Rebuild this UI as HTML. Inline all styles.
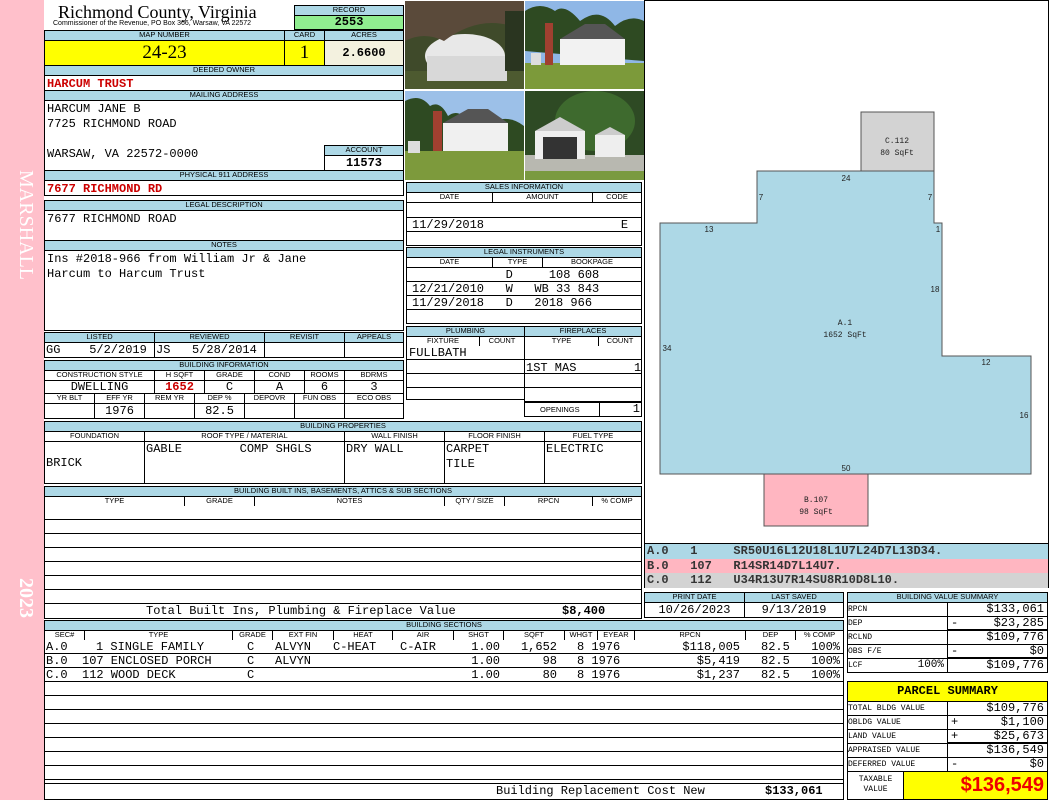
<!DOCTYPE html>
<html><head><meta charset="utf-8"><style>
*{margin:0;padding:0}
body{width:1050px;height:800px;background:#fff;position:relative;overflow:hidden;font-family:"Liberation Mono",monospace}
div{position:absolute;box-sizing:border-box}
.h{background:#add8e6;border:1px solid #000;font:7.5px/8px "Liberation Sans",sans-serif;text-align:center;color:#000;white-space:nowrap;overflow:hidden}
.c{border:1px solid #000;background:#fff;font-size:12px;line-height:13px;white-space:pre;overflow:hidden}
.r{text-align:right;padding-right:3px}
.m{text-align:center}
.red{color:#c00;font-weight:bold}
.s{position:absolute;white-space:pre;font-size:12px;line-height:14px}
.sr{position:absolute;white-space:pre;font-size:12px;line-height:14px;text-align:right}
.sg{position:absolute;left:3px;top:0}
.sv{position:absolute;right:3px;top:0}
</style></head><body>
<div style="left:0;top:0;width:44px;height:800px;background:#ffc0cb"></div>
<div style="left:9px;top:170px;width:28px;height:140px;writing-mode:vertical-rl;font:20px 'Liberation Serif',serif;color:#fff">MARSHALL</div>
<div style="left:9px;top:578px;width:28px;height:60px;writing-mode:vertical-rl;font:bold 20px 'Liberation Serif',serif;color:#fff">2023</div>

<div style="left:58px;top:2px;font:18px/21px 'Liberation Serif',serif;white-space:nowrap">Richmond County, Virginia</div>
<div style="left:53px;top:19px;font:7px/9px 'Liberation Sans',sans-serif;white-space:nowrap">Commissioner of the Revenue, PO Box 366, Warsaw, VA 22572</div>
<div class="h" style="left:294px;top:5px;width:110px;height:11px">RECORD</div>
<div class="c m" style="left:294px;top:15px;width:110px;height:15px;background:#90ee90;font-weight:bold;line-height:13px">2553</div>

<div class="h" style="left:44px;top:30px;width:241px;height:11px">MAP NUMBER</div>
<div class="h" style="left:284px;top:30px;width:41px;height:11px">CARD</div>
<div class="h" style="left:324px;top:30px;width:80px;height:11px">ACRES</div>
<div class="c m" style="left:44px;top:40px;width:241px;height:26px;background:#ff0;font:19px/24px 'Liberation Serif',serif">24-23</div>
<div class="c m" style="left:284px;top:40px;width:41px;height:26px;background:#ff0;font:19px/24px 'Liberation Serif',serif">1</div>
<div class="c m" style="left:324px;top:40px;width:80px;height:26px;background:#f3f1df;font-weight:bold;line-height:24px">2.6600</div>

<div class="h" style="left:44px;top:65px;width:360px;height:11px">DEEDED OWNER</div>
<div class="c red" style="left:44px;top:75px;width:360px;height:16px;padding-left:2px;line-height:16px">HARCUM TRUST</div>
<div class="h" style="left:44px;top:90px;width:360px;height:11px">MAILING ADDRESS</div>
<div class="c" style="left:44px;top:100px;width:360px;height:71px;padding:1px 2px;line-height:15px">HARCUM JANE B
7725 RICHMOND ROAD

WARSAW, VA 22572-0000</div>
<div class="h" style="left:324px;top:145px;width:80px;height:11px">ACCOUNT</div>
<div class="c m" style="left:324px;top:155px;width:80px;height:16px;font-weight:bold;line-height:15px">11573</div>
<div class="h" style="left:44px;top:170px;width:360px;height:11px">PHYSICAL 911 ADDRESS</div>
<div class="c red" style="left:44px;top:180px;width:360px;height:16px;padding-left:2px;line-height:16px">7677 RICHMOND RD</div>

<div class="h" style="left:44px;top:200px;width:360px;height:11px">LEGAL DESCRIPTION</div>
<div class="c" style="left:44px;top:210px;width:360px;height:31px;padding:1px 2px;line-height:15px">7677 RICHMOND ROAD</div>
<div class="h" style="left:44px;top:240px;width:360px;height:11px">NOTES</div>
<div class="c" style="left:44px;top:250px;width:360px;height:81px;padding:1px 2px;line-height:15px">Ins #2018-966 from William Jr &amp; Jane
Harcum to Harcum Trust</div>

<div class="h" style="left:44px;top:332px;width:111px;height:11px">LISTED</div>
<div class="h" style="left:154px;top:332px;width:111px;height:11px">REVIEWED</div>
<div class="h" style="left:264px;top:332px;width:81px;height:11px">REVISIT</div>
<div class="h" style="left:344px;top:332px;width:60px;height:11px">APPEALS</div>
<div class="c" style="left:44px;top:342px;width:111px;height:16px;padding-left:1px;line-height:15px">GG    5/2/2019</div>
<div class="c" style="left:154px;top:342px;width:111px;height:16px;padding-left:1px;line-height:15px">JS   5/28/2014</div>
<div class="c" style="left:264px;top:342px;width:81px;height:16px"></div>
<div class="c" style="left:344px;top:342px;width:60px;height:16px"></div>

<div class="h" style="left:44px;top:360px;width:360px;height:11px">BUILDING INFORMATION</div>
<div class="h" style="left:44px;top:370px;width:111px;height:11px;background:#fff">CONSTRUCTION STYLE</div>
<div class="h" style="left:154px;top:370px;width:51px;height:11px;background:#fff">H SQFT</div>
<div class="h" style="left:204px;top:370px;width:51px;height:11px;background:#fff">GRADE</div>
<div class="h" style="left:254px;top:370px;width:51px;height:11px;background:#fff">COND</div>
<div class="h" style="left:304px;top:370px;width:41px;height:11px;background:#fff">ROOMS</div>
<div class="h" style="left:344px;top:370px;width:60px;height:11px;background:#fff">BDRMS</div>
<div class="c m" style="left:44px;top:380px;width:111px;height:14px">DWELLING</div>
<div class="c m red" style="left:154px;top:380px;width:51px;height:14px">1652</div>
<div class="c m" style="left:204px;top:380px;width:51px;height:14px">C</div>
<div class="c m" style="left:254px;top:380px;width:51px;height:14px">A</div>
<div class="c m" style="left:304px;top:380px;width:41px;height:14px">6</div>
<div class="c m" style="left:344px;top:380px;width:60px;height:14px">3</div>
<div class="h" style="left:44px;top:393px;width:51px;height:11px;background:#fff">YR BLT</div>
<div class="h" style="left:94px;top:393px;width:51px;height:11px;background:#fff">EFF YR</div>
<div class="h" style="left:144px;top:393px;width:51px;height:11px;background:#fff">REM YR</div>
<div class="h" style="left:194px;top:393px;width:51px;height:11px;background:#fff">DEP %</div>
<div class="h" style="left:244px;top:393px;width:51px;height:11px;background:#fff">DEPOVR</div>
<div class="h" style="left:294px;top:393px;width:51px;height:11px;background:#fff">FUN OBS</div>
<div class="h" style="left:344px;top:393px;width:60px;height:11px;background:#fff">ECO OBS</div>
<div class="c" style="left:44px;top:403px;width:51px;height:16px"></div>
<div class="c m" style="left:94px;top:403px;width:51px;height:16px;line-height:14px">1976</div>
<div class="c" style="left:144px;top:403px;width:51px;height:16px"></div>
<div class="c m" style="left:194px;top:403px;width:51px;height:16px;line-height:14px">82.5</div>
<div class="c" style="left:244px;top:403px;width:51px;height:16px"></div>
<div class="c" style="left:294px;top:403px;width:51px;height:16px"></div>
<div class="c" style="left:344px;top:403px;width:60px;height:16px"></div>

<div class="h" style="left:44px;top:421px;width:598px;height:11px">BUILDING PROPERTIES</div>
<div class="h" style="left:44px;top:431px;width:101px;height:11px;background:#fff">FOUNDATION</div>
<div class="h" style="left:144px;top:431px;width:201px;height:11px;background:#fff">ROOF TYPE / MATERIAL</div>
<div class="h" style="left:344px;top:431px;width:101px;height:11px;background:#fff">WALL FINISH</div>
<div class="h" style="left:444px;top:431px;width:101px;height:11px;background:#fff">FLOOR FINISH</div>
<div class="h" style="left:544px;top:431px;width:98px;height:11px;background:#fff">FUEL TYPE</div>
<div class="c" style="left:44px;top:441px;width:101px;height:43px;padding:14px 1px 0;line-height:15px">BRICK</div>
<div class="c" style="left:144px;top:441px;width:201px;height:43px;padding:0 1px;line-height:15px">GABLE        COMP SHGLS</div>
<div class="c" style="left:344px;top:441px;width:101px;height:43px;padding:0 1px;line-height:15px">DRY WALL</div>
<div class="c" style="left:444px;top:441px;width:101px;height:43px;padding:0 1px;line-height:15px">CARPET
TILE</div>
<div class="c" style="left:544px;top:441px;width:98px;height:43px;padding:0 1px;line-height:15px">ELECTRIC</div>

<div class="h" style="left:44px;top:486px;width:598px;height:11px">BUILDING BUILT INS, BASEMENTS, ATTICS &amp; SUB SECTIONS</div>
<div class="h" style="left:44px;top:496px;width:141px;height:11px;background:#fff">TYPE</div>
<div class="h" style="left:184px;top:496px;width:71px;height:11px;background:#fff">GRADE</div>
<div class="h" style="left:254px;top:496px;width:191px;height:11px;background:#fff">NOTES</div>
<div class="h" style="left:444px;top:496px;width:61px;height:11px;background:#fff">QTY / SIZE</div>
<div class="h" style="left:504px;top:496px;width:89px;height:11px;background:#fff">RPCN</div>
<div class="h" style="left:592px;top:496px;width:50px;height:11px;background:#fff">% COMP</div>
<div style="left:44px;top:506px;width:598px;height:98px;border:1px solid #000;border-top:0;background:repeating-linear-gradient(#fff 0 13px,#000 13px 14px)"></div>
<div class="c" style="left:44px;top:603px;width:598px;height:16px;line-height:15px"><span style="position:absolute;left:101px">Total Built Ins, Plumbing &amp; Fireplace Value</span><span style="position:absolute;left:517px;font-weight:bold">$8,400</span></div>

<!-- building sections -->
<div class="h" style="left:44px;top:620px;width:800px;height:11px">BUILDING SECTIONS</div>
<div class="h" style="left:44px;top:630px;width:41px;height:11px;background:#fff">SEC#</div>
<div class="h" style="left:84px;top:630px;width:149px;height:11px;background:#fff">TYPE</div>
<div class="h" style="left:232px;top:630px;width:41px;height:11px;background:#fff">GRADE</div>
<div class="h" style="left:272px;top:630px;width:62px;height:11px;background:#fff">EXT FIN</div>
<div class="h" style="left:333px;top:630px;width:60px;height:11px;background:#fff">HEAT</div>
<div class="h" style="left:392px;top:630px;width:62px;height:11px;background:#fff">AIR</div>
<div class="h" style="left:453px;top:630px;width:51px;height:11px;background:#fff">SHGT</div>
<div class="h" style="left:503px;top:630px;width:62px;height:11px;background:#fff">SQFT</div>
<div class="h" style="left:564px;top:630px;width:34px;height:11px;background:#fff">WHGT</div>
<div class="h" style="left:597px;top:630px;width:38px;height:11px;background:#fff">EYEAR</div>
<div class="h" style="left:634px;top:630px;width:112px;height:11px;background:#fff">RPCN</div>
<div class="h" style="left:745px;top:630px;width:51px;height:11px;background:#fff">DEP</div>
<div class="h" style="left:795px;top:630px;width:49px;height:11px;background:#fff">% COMP</div>
<div style="left:44px;top:640px;width:800px;height:160px;border:1px solid #000;border-top:0;background:repeating-linear-gradient(#fff 0 13px,#000 13px 14px)"></div>
<div style="left:45px;top:640px;width:798px;height:41px;background:#fff"></div>
<div style="left:44px;top:653px;width:800px;height:1px;background:#000"></div>
<div style="left:44px;top:667px;width:800px;height:1px;background:#000"></div>
<div style="left:44px;top:681px;width:800px;height:1px;background:#000"></div>

<div class="s" style="left:46px;top:640px">A.0</div><div class="s" style="left:46px;top:654px">B.0</div><div class="s" style="left:46px;top:668px">C.0</div>
<div class="s" style="left:96px;top:640px">1 SINGLE FAMILY</div><div class="s" style="left:82px;top:654px">107 ENCLOSED PORCH</div><div class="s" style="left:82px;top:668px">112 WOOD DECK</div>
<div class="s" style="left:247px;top:640px">C</div><div class="s" style="left:247px;top:654px">C</div><div class="s" style="left:247px;top:668px">C</div>
<div class="s" style="left:275px;top:640px">ALVYN</div><div class="s" style="left:275px;top:654px">ALVYN</div>
<div class="s" style="left:333px;top:640px">C-HEAT</div><div class="s" style="left:400px;top:640px">C-AIR</div>
<div class="sr" style="right:550px;top:640px">1.00</div><div class="sr" style="right:550px;top:654px">1.00</div><div class="sr" style="right:550px;top:668px">1.00</div>
<div class="sr" style="right:493px;top:640px">1,652</div><div class="sr" style="right:493px;top:654px">98</div><div class="sr" style="right:493px;top:668px">80</div>
<div class="s" style="left:577px;top:640px">8 1976</div><div class="s" style="left:577px;top:654px">8 1976</div><div class="s" style="left:577px;top:668px">8 1976</div>
<div class="sr" style="right:310px;top:640px">$118,005</div><div class="sr" style="right:310px;top:654px">$5,419</div><div class="sr" style="right:310px;top:668px">$1,237</div>
<div class="s" style="left:761px;top:640px">82.5</div><div class="s" style="left:761px;top:654px">82.5</div><div class="s" style="left:761px;top:668px">82.5</div>
<div class="sr" style="right:210px;top:640px">100%</div><div class="sr" style="right:210px;top:654px">100%</div><div class="sr" style="right:210px;top:668px">100%</div>

<div style="left:44px;top:783px;width:800px;height:17px;border:1px solid #000;background:#fff;font-size:12px;line-height:15px;white-space:pre"><span style="position:absolute;left:451px">Building Replacement Cost New</span><span style="position:absolute;left:720px;font-weight:bold">$133,061</span></div>

<svg style="position:absolute;left:404px;top:0" width="241" height="181">
<rect width="241" height="181" fill="#fff"/>
<g transform="translate(1,1)"><rect width="119" height="88" fill="#3f4a2a"/><rect y="70" width="119" height="18" fill="#4d5a30"/><ellipse cx="60" cy="55" rx="40" ry="22" fill="#e8e8e8"/><rect x="22" y="55" width="80" height="25" fill="#d8d8d8"/><path d="M0 0h119v30q-40-20-80 10q-20-10-39 0z" fill="#5a4a3a"/><rect x="100" y="10" width="19" height="60" fill="#2a3520"/></g>
<g transform="translate(121,1)"><rect width="119" height="88" fill="#8fb7e6"/><path d="M0 50V10q15-10 30 0q10-8 25 10q20-15 35 5q15-12 29 -5v40z" fill="#2e4a22"/><rect y="62" width="119" height="26" fill="#7c9a3a"/><rect x="35" y="38" width="65" height="26" fill="#f2f2f2"/><path d="M35 38l25-15h20l20 15z" fill="#555"/><rect x="20" y="22" width="8" height="42" fill="#a04030"/><rect x="6" y="52" width="10" height="12" fill="#ddd"/></g>
<g transform="translate(1,91)"><rect width="119" height="89" fill="#9cc0e8"/><path d="M0 70V10q15-8 25 5q10-6 18 10q10 -8 20 5v50z" fill="#2e4a22"/><path d="M90 70V30q15-6 29 5v35z" fill="#2e4a22"/><rect y="60" width="119" height="29" fill="#7d9a3c"/><rect x="38" y="32" width="65" height="28" fill="#f0f0f0"/><path d="M38 32l25-14h20l20 14z" fill="#555"/><rect x="28" y="20" width="9" height="40" fill="#a04030"/><rect x="3" y="50" width="12" height="12" fill="#ddd"/></g>
<g transform="translate(121,91)"><rect width="119" height="89" fill="#2e4a24"/><ellipse cx="70" cy="30" rx="40" ry="30" fill="#3e6a2e"/><rect y="64" width="119" height="25" fill="#b8b8b0"/><rect y="80" width="119" height="9" fill="#7a9a40"/><rect x="10" y="40" width="50" height="28" fill="#eee"/><path d="M10 40l25-14l25 14z" fill="#ccc"/><rect x="18" y="46" width="34" height="22" fill="#333"/><rect x="70" y="44" width="30" height="22" fill="#eee"/><path d="M70 44l15-8l15 8z" fill="#ccc"/></g>
</svg>

<div class="h" style="left:406px;top:182px;width:236px;height:11px">SALES INFORMATION</div>
<div class="h" style="left:406px;top:192px;width:87px;height:11px;background:#fff">DATE</div>
<div class="h" style="left:492px;top:192px;width:101px;height:11px;background:#fff">AMOUNT</div>
<div class="h" style="left:592px;top:192px;width:50px;height:11px;background:#fff">CODE</div>
<div class="c" style="left:406px;top:202px;width:236px;height:16px"></div>
<div class="c" style="left:406px;top:217px;width:236px;height:15px;padding-left:5px;line-height:14px">11/29/2018                   E</div>
<div class="c" style="left:406px;top:231px;width:236px;height:15px"></div>

<div class="h" style="left:406px;top:247px;width:236px;height:11px">LEGAL INSTRUMENTS</div>
<div class="h" style="left:406px;top:257px;width:87px;height:11px;background:#fff">DATE</div>
<div class="h" style="left:492px;top:257px;width:51px;height:11px;background:#fff">TYPE</div>
<div class="h" style="left:542px;top:257px;width:100px;height:11px;background:#fff">BOOKPAGE</div>
<div class="c" style="left:406px;top:267px;width:236px;height:15px;padding-left:5px;line-height:14px">             D     108 608</div>
<div class="c" style="left:406px;top:281px;width:236px;height:15px;padding-left:5px;line-height:14px">12/21/2010   W   WB 33 843</div>
<div class="c" style="left:406px;top:295px;width:236px;height:15px;padding-left:5px;line-height:14px">11/29/2018   D   2018 966</div>
<div class="c" style="left:406px;top:309px;width:236px;height:15px"></div>

<div class="h" style="left:406px;top:326px;width:119px;height:11px">PLUMBING</div>
<div class="h" style="left:524px;top:326px;width:118px;height:11px">FIREPLACES</div>
<div class="h" style="left:406px;top:336px;width:74px;height:11px;background:#fff">FIXTURE</div>
<div class="h" style="left:479px;top:336px;width:46px;height:11px;background:#fff">COUNT</div>
<div class="h" style="left:524px;top:336px;width:75px;height:11px;background:#fff">TYPE</div>
<div class="h" style="left:598px;top:336px;width:44px;height:11px;background:#fff">COUNT</div>
<div style="left:406px;top:346px;width:119px;height:54px;border:1px solid #000;border-top:0;background:repeating-linear-gradient(#fff 0 13px,#000 13px 14px)"></div>
<div style="left:406px;top:346px;width:119px;height:13px;font-size:12px;line-height:14px;white-space:pre;padding-left:2px;background:#fff;border-left:1px solid #000;border-right:1px solid #000">FULLBATH        2</div>
<div style="left:524px;top:346px;width:118px;height:71px;border:1px solid #000;border-top:0;background:repeating-linear-gradient(#fff 0 13px,#000 13px 14px)"></div>
<div style="left:525px;top:361px;width:116px;height:12px;font-size:12px;line-height:14px;white-space:pre;padding-left:1px;background:#fff">1ST MAS        1</div>
<div style="left:524px;top:402px;width:118px;height:15px;border:1px solid #000;background:#fff;font:7.5px/13px 'Liberation Sans',sans-serif;padding-left:15px">OPENINGS<span style="position:absolute;left:74px;top:0;height:13px;border-left:1px solid #000;width:40px;font:12px/13px 'Liberation Mono';text-align:right;padding-right:3px">1</span></div>

<div style="left:644px;top:0;width:405px;height:544px;border:1px solid #000;border-bottom:0"></div>
<svg style="position:absolute;left:644px;top:0" width="406" height="544">
<g transform="translate(-644,0)" font-family="Liberation Sans,sans-serif" font-size="8">
<polygon points="861,112 934,112 934,171 861,171" fill="#d3d3d3" stroke="#555"/>
<polygon points="660,223 757,223 757,171 934,171 934,223 942,223 942,356 1031,356 1031,474 660,474" fill="#add8e6" stroke="#555"/>
<polygon points="764,474 868,474 868,526 764,526" fill="#ffb6c1" stroke="#555"/>
<g font-family="Liberation Mono,monospace" font-size="8" text-anchor="middle" fill="#222">
<text x="897" y="143">C.112</text><text x="897" y="155">80 SqFt</text>
<text x="845" y="325">A.1</text><text x="845" y="337">1652 SqFt</text>
<text x="816" y="502">B.107</text><text x="816" y="514">98 SqFt</text>
</g>
<g fill="#222" text-anchor="middle"><text x="846" y="181">24</text><text x="761" y="200">7</text><text x="930" y="200">7</text><text x="709" y="232">13</text><text x="938" y="232">1</text><text x="935" y="292">18</text><text x="667" y="351">34</text><text x="986" y="365">12</text><text x="1024" y="418">16</text><text x="846" y="471">50</text></g>
</g></svg>
<div style="left:644px;top:543px;width:405px;height:45px;border:1px solid #000;font-size:12px;line-height:14.5px;white-space:pre;font-weight:bold;color:#333">
<div style="left:0;right:0;top:0;height:14.5px;background:#add8e6;padding-left:2px">A.0   1     SR50U16L12U18L1U7L24D7L13D34.</div>
<div style="left:0;right:0;top:14.5px;height:14.5px;background:#ffb6c1;padding-left:2px">B.0   107   R14SR14D7L14U7.</div>
<div style="left:0;right:0;top:29px;height:15px;background:#d3d3d3;padding-left:2px">C.0   112   U34R13U7R14SU8R10D8L10.</div></div>

<div class="h" style="left:644px;top:592px;width:101px;height:11px">PRINT DATE</div>
<div class="h" style="left:744px;top:592px;width:100px;height:11px">LAST SAVED</div>
<div class="c m" style="left:644px;top:602px;width:101px;height:16px;line-height:15px">10/26/2023</div>
<div class="c m" style="left:744px;top:602px;width:100px;height:16px;line-height:15px">9/13/2019</div>

<div class="h" style="left:847px;top:592px;width:201px;height:11px">BUILDING VALUE SUMMARY</div>
<div style="left:847px;top:602px;width:201px;height:71px;font-size:12px;line-height:13px;white-space:pre">
<div class="c" style="left:0;top:0;width:101px;height:15px;font-size:8px">RPCN</div><div class="c" style="left:100px;top:0;width:101px;height:15px"><span class="sv">$133,061</span></div>
<div class="c" style="left:0;top:14px;width:101px;height:15px;font-size:8px">DEP</div><div class="c" style="left:100px;top:14px;width:101px;height:15px;border-bottom-width:2px"><span class="sg">-</span><span class="sv">$23,285</span></div>
<div class="c" style="left:0;top:28px;width:101px;height:15px;font-size:8px">RCLND</div><div class="c" style="left:100px;top:28px;width:101px;height:15px"><span class="sv">$109,776</span></div>
<div class="c" style="left:0;top:42px;width:101px;height:15px;font-size:8px">OBS F/E</div><div class="c" style="left:100px;top:42px;width:101px;height:15px;border-bottom-width:2px"><span class="sg">-</span><span class="sv">$0</span></div>
<div class="c" style="left:0;top:56px;width:101px;height:15px;font-size:8px">LCF<span style="position:absolute;right:3px;font-size:11px">100%</span></div><div class="c" style="left:100px;top:56px;width:101px;height:15px"><span class="sv">$109,776</span></div>
</div>

<div class="c m" style="left:847px;top:681px;width:201px;height:21px;background:#ff0;font-weight:bold;line-height:19px">PARCEL SUMMARY</div>
<div style="left:847px;top:701px;width:201px;height:99px;font-size:12px;line-height:13px;white-space:pre">
<div class="c" style="left:0;top:0;width:101px;height:15px;font-size:8px">TOTAL BLDG VALUE</div><div class="c" style="left:100px;top:0;width:101px;height:15px"><span class="sv">$109,776</span></div>
<div class="c" style="left:0;top:14px;width:101px;height:15px;font-size:8px">OBLDG VALUE</div><div class="c" style="left:100px;top:14px;width:101px;height:15px"><span class="sg">+</span><span class="sv">$1,100</span></div>
<div class="c" style="left:0;top:28px;width:101px;height:15px;font-size:8px">LAND VALUE</div><div class="c" style="left:100px;top:28px;width:101px;height:15px;border-bottom-width:2px"><span class="sg">+</span><span class="sv">$25,673</span></div>
<div class="c" style="left:0;top:42px;width:101px;height:15px;font-size:8px">APPRAISED VALUE</div><div class="c" style="left:100px;top:42px;width:101px;height:15px"><span class="sv">$136,549</span></div>
<div class="c" style="left:0;top:56px;width:101px;height:15px;font-size:8px">DEFERRED VALUE</div><div class="c" style="left:100px;top:56px;width:101px;height:15px"><span class="sg">-</span><span class="sv">$0</span></div>
<div class="c m" style="left:0;top:70px;width:57px;height:29px;font-size:8px;line-height:10px;padding-top:3px">TAXABLE
VALUE</div>
<div class="c r" style="left:56px;top:70px;width:145px;height:29px;background:#ff0;color:#e00;font:bold 20px/27px 'Liberation Sans',sans-serif">$136,549</div>
</div>
</body></html>
